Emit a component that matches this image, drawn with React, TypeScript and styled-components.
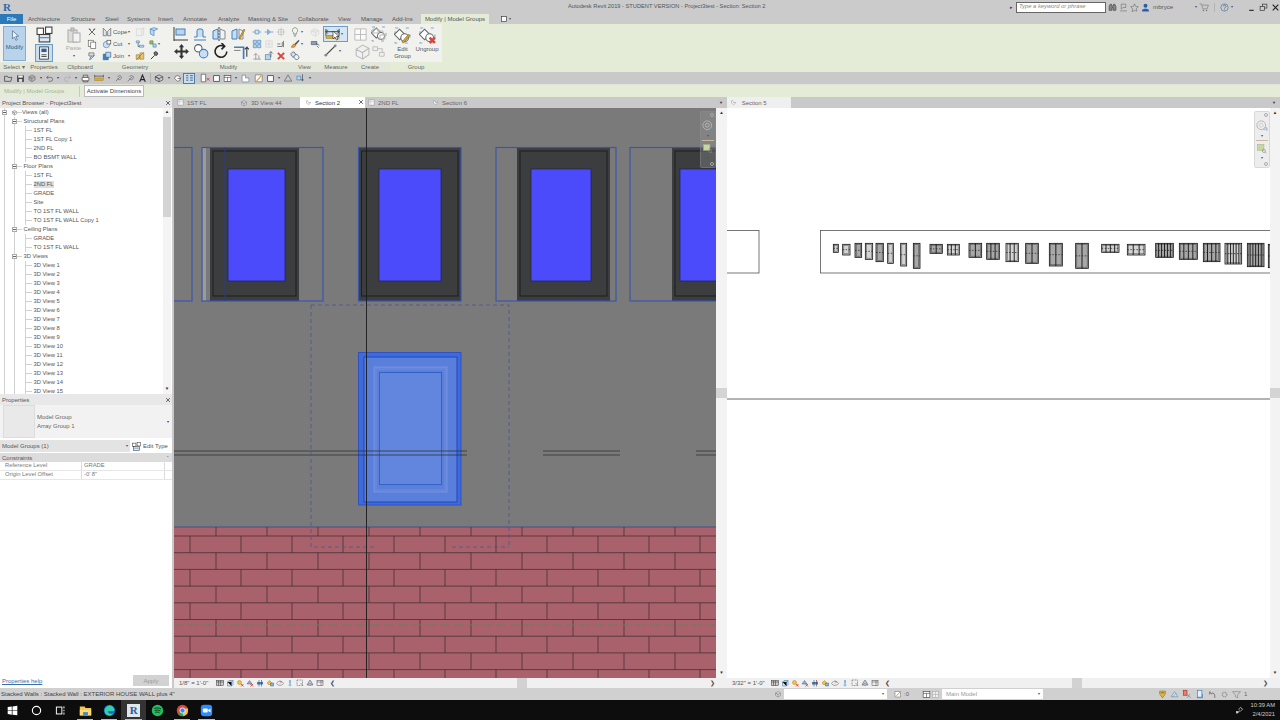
import React from 'react';
import styled, { createGlobalStyle, css } from 'styled-components';

const Global = createGlobalStyle`
  html, body { margin: 0; padding: 0; background: #fff; }
  #root { width: 1280px; height: 720px; overflow: hidden; }
  * { box-sizing: border-box; }
`;

const Page = styled.div`
  width: 1280px; height: 720px; display: flex; flex-direction: column; overflow: hidden;
  font-family: "Liberation Sans", Arial, sans-serif; font-size: 6px; line-height: 1; color: #444; background: #ccc;
`;

/* ---------- icons ---------- */
const Svg = styled.svg<{ $s?: number; $faded?: boolean }>`
  width: ${p => p.$s ?? 10}px; height: ${p => p.$s ?? 10}px; flex: none; display: block;
  ${p => p.$faded && css`opacity: .4;`}
`;
const B = '#3f80bd', D = '#3b3b3b', G = '#8a8a8a', Y = '#d9a93a', R = '#d8433a';
const paths: Record<string, React.ReactNode> = {
  cursor: <path d="M5 1v12l3-3 2 5 2-1-2-5h4z" fill="#eef4fa" stroke="#44658a" />,
  props: <><rect x="1" y="2" width="6" height="6" fill="#fff" stroke={D} /><rect x="9" y="1" width="6" height="6" fill="#fff" stroke={D} /><rect x="3" y="8" width="10" height="7" fill="#dfe8f2" stroke={D} /><path d="M3 11h10" stroke={B} /></>,
  propsS: <><rect x="3" y="1" width="10" height="14" fill="#f4f6f8" stroke={D} /><rect x="5" y="3" width="6" height="4" fill="#2f5e93" /><path d="M5 10h6M5 12h6" stroke={D} /></>,
  paste: <><rect x="2" y="3" width="9" height="12" fill="#ddd" stroke="#aaa" /><rect x="5" y="1" width="3" height="3" fill="#ccc" stroke="#aaa" /><rect x="7" y="6" width="7" height="9" fill="#f3f3f3" stroke="#aaa" /></>,
  x: <path d="M3 3l10 10M13 3L3 13M3 3l3 1M13 3l-3 1" stroke="#555" strokeWidth="1.4" fill="none" />,
  copy: <><rect x="2" y="2" width="8" height="10" fill="#fff" stroke="#555" /><rect x="6" y="5" width="8" height="10" fill="#fff" stroke="#555" /></>,
  match: <><path d="M3 3h8v5H3z" fill="#ddd" stroke="#555" /><path d="M7 8l-3 6M5 14l7-7" stroke={B} strokeWidth="1.5" /></>,
  cope: <><path d="M2 2l5 5v7H2zM14 2L9 7v7h5z" fill="#dfe7ef" stroke="#555" /></>,
  cut: <><circle cx="7" cy="9" r="5" fill="#cfe0f0" stroke={B} /><rect x="8" y="2" width="6" height="6" fill="#fff" stroke={D} /></>,
  join: <><path d="M2 5h8v9H2z" fill={B} stroke="#2c5f91" /><path d="M6 2h8v8H6z" fill="#bcd4ea" stroke="#2c5f91" /></>,
  geo1: <><rect x="2" y="3" width="9" height="11" fill="#eee" stroke="#aaa" /><path d="M11 3l3-2v11l-3 2" fill="#ddd" stroke="#aaa" /></>,
  geo2: <><path d="M2 3h5v3H2zM7 10h7v3H7z" fill="#c9def0" stroke={B} /><path d="M5 6v6h2" stroke={D} fill="none" /></>,
  geo3: <><path d="M2 13V6h5v7zM8 13V3h6v10z" fill="#e3c67f" stroke="#a07c20" /><path d="M2 14l12-12" stroke={B} /></>,
  geo4: <><path d="M2 3l6-2 6 2-6 3zM2 3v8l6 3V6" fill="#bcd4ea" stroke={B} /></>,
  geo5: <><path d="M3 3h5v5H3z" fill="#9bc46a" stroke="#4f7f2a" /><path d="M8 8h5v5H8z" fill="#bcd4ea" stroke={B} /></>,
  key: <path d="M3 13l6-6M8 3a3 3 0 1 1 4 4l-3-1z" stroke={D} strokeWidth="1.6" fill="#777" />,
  align: <><path d="M1 1v14M1 14h14" stroke={D} fill="none" /><rect x="3" y="3" width="9" height="6" fill="#bcd4ea" stroke={B} /></>,
  offset: <><path d="M2 14h12M2 11h3V5a2 2 0 0 1 2-2h2a2 2 0 0 1 2 2v6h3" fill="#c9def0" stroke={B} /></>,
  mirror: <><path d="M8 1v14" stroke={D} strokeDasharray="2 1" /><path d="M7 3v10L2 13V5z" fill="#c9def0" stroke={B} /><path d="M9 3v10l5 0V5z" fill="#eef3f8" stroke={G} /></>,
  mirror2: <><path d="M7 3v10L2 13V5z" fill="#c9def0" stroke={B} /><path d="M9 3v10l4 0V5z" fill="#eef3f8" stroke={G} /><path d="M10 13l5-9-1-1-5 9z" fill={Y} stroke="#8b6a12" strokeWidth=".6" /></>,
  move: <path d="M8 1l2.500 3h-1.500v3h3V5.500L15 8l-3 2.500V9H9v3h1.500L8 15l-2.500-3H7V9H4v1.500L1 8l3-2.500V7h3V4H5.500z" fill="#333" />,
  copyO: <><circle cx="5" cy="5" r="3.500" fill="#fff" stroke="#555" /><circle cx="10" cy="10" r="4" fill="#c9def0" stroke={B} /></>,
  rotate: <path d="M13 8a5.500 5.500 0 1 1-3-5M8 0l3 3-3 3" fill="none" stroke="#222" strokeWidth="1.500" />,
  trim: <><path d="M1 4h9v11" fill="none" stroke={B} strokeWidth="1.600" /><path d="M13 13V4l-2 2M13 4l2 2" stroke={D} fill="none" /><path d="M1 7h6" stroke={G} /></>,
  s1: <path d="M1 8h4M11 8h4M5 5h6v6H5z" stroke={B} fill="#d6e5f3" />,
  s2: <path d="M1 8h5M10 8h5M6 4l4 4-4 4zM10 4" stroke={B} fill="#9cc1e2" />,
  s3: <><path d="M2 2h5v5H2zM9 2h5v5H9zM2 9h5v5H2zM9 9h5v5H9z" fill="#bcd4ea" stroke={B} /></>,
  s4: <><rect x="3" y="3" width="10" height="10" fill="#eee" stroke="#aaa" /><path d="M3 8h10M8 3v10" stroke="#aaa" /></>,
  s5: <path d="M2 13h12M6 13V4l-3 3M6 4l3 3M11 13V7" stroke="#777" fill="none" />,
  s6: <path d="M4 4h8v8H4zM8 1v14M1 8h14" stroke="#666" fill="none" />,
  s7: <path d="M2 12h8V5M2 8h5M12 3v10" stroke={D} fill="none" />,
  s8: <><rect x="2" y="6" width="8" height="8" fill="#bcd4ea" stroke={B} /><path d="M11 1v9M14 4l-3-3-3 3" stroke={D} fill="none" /></>,
  del: <path d="M3 3l10 10M13 3L3 13" stroke={R} strokeWidth="3" />,
  bulb: <><path d="M8 1a4.500 4.500 0 0 0-2.500 8v2h5V9A4.500 4.500 0 0 0 8 1z" fill="#f8f4d8" stroke="#4d7396" /><path d="M6 13h4M7 15h2" stroke="#555" /></>,
  grayBox: <><path d="M2 6l5-3 7 3-5 3z" fill="#ddd" stroke="#aaa" /><path d="M2 6v5l7 4V9zM14 6v5l-5 4" fill="#eee" stroke="#aaa" /></>,
  paint: <><path d="M14 1L7 8l2 2 6-7z" fill="#555" /><path d="M7 8c-3 0-3 3-5 5 3 1 7 0 7-3z" fill={Y} stroke="#b9501f" /></>,
  screen: <><path d="M2 4h9v5H2z" fill="#8aa2bd" stroke="#556" /><path d="M11 11l3 3M9 7l6 3" stroke={D} /></>,
  link: <><rect x="2" y="2" width="7" height="8" rx="3" fill="#c9def0" stroke="#556" transform="rotate(-30 5 6)" /><rect x="7" y="6" width="7" height="8" rx="3" fill="#eef3f8" stroke="#556" transform="rotate(-30 10 10)" /></>,
  dim: <><path d="M1 2v7M15 2v7M1 5h14" stroke={D} fill="none" /><path d="M1 5l2-2M1 5l2 2M15 5l-2-2M15 5l-2 2" stroke={D} /><rect x="1" y="9" width="14" height="3" fill={Y} stroke="#856611" strokeWidth=".5" /></>,
  diag: <><path d="M3 13L13 3" stroke="#444" strokeWidth="1.300" /><circle cx="3" cy="13" r="1.500" fill="#888" /><circle cx="13" cy="3" r="1.500" fill="#888" /></>,
  fadeA: <><path d="M2 2h12v12H2zM2 8h12M8 2v12" fill="#fafafa" stroke="#bbb" /></>,
  fadeB: <><path d="M3 6l6-4 6 3-6 4zM3 6v6l6 3V9z" fill="#f1f1f1" stroke="#bbb" /><path d="M15 5v6l-6 4" fill="none" stroke="#bbb" /></>,
  fadeC: <><path d="M2 3h5v4H2zM9 9h5v4H9zM7 5h5v4" fill="none" stroke="#bbb" /></>,
  group: <><rect x="1" y="1" width="14" height="14" fill="none" stroke="#7ea9cf" strokeDasharray="3 7" /><rect x="2" y="4" width="7" height="7" fill="#fff" stroke="#666" transform="rotate(45 6 7)" /><circle cx="10" cy="10" r="3.600" fill="#fff" stroke="#666" /></>,
  pencil: <path d="M9 15l6-7-1.500-1-6 7z" fill={Y} stroke="#7a5c10" strokeWidth=".6" />,
  redx: <path d="M10 10l5 5M15 10l-5 5" stroke={R} strokeWidth="2.400" />,
  star: <path d="M8 1.500l2 4.500 4.800.5-3.600 3.200 1 4.800L8 13l-4.200 2.500 1-4.800L1.200 6.500 6 6z" fill="none" stroke="#666" />,
  binoc: <path d="M2 13V6l2-4h2v3h4V2h2l2 4v7h-5V8H7v5z" fill="#888" stroke="#333" />,
  comm: <><path d="M4 2h8v6H7l-3 3z" fill="none" stroke="#666" /><path d="M2 14h12" stroke="#666" /></>,
  user: <><circle cx="8" cy="5" r="3.500" fill="#2a5ea8" /><path d="M2 15v-3l4-2h4l4 2v3z" fill="#2a5ea8" /></>,
  cart: <><path d="M1 3h3l2 8h7l2-6H5" fill="none" stroke="#777" /><circle cx="7" cy="13.500" r="1.200" fill="#777" /><circle cx="12" cy="13.500" r="1.200" fill="#777" /></>,
  help: <><circle cx="8" cy="8" r="6.500" fill="none" stroke="#4d7eb5" strokeWidth="1.300" /><path d="M6 6c0-3 4.500-3 4.500 0 0 2-2.500 1.800-2.500 4M8 11.500v1.500" stroke="#555" fill="none" strokeWidth="1.200" /></>,
  min: <path d="M4 13h8" stroke="#222" strokeWidth="2" />,
  restore: <><rect x="6" y="2" width="8" height="7" fill="none" stroke="#333" strokeWidth="1.200" /><rect x="2" y="6" width="8" height="7" fill="#ccc" stroke="#333" strokeWidth="1.200" /></>,
  close: <path d="M3 3l10 10M13 3L3 13" stroke="#222" strokeWidth="2" />,
  closeT: <path d="M3 3l10 10M13 3L3 13" stroke="#222" strokeWidth="1.800" />,
  open: <path d="M1 4h5l1 2h7l-2 7H1z" fill="none" stroke="#333" strokeWidth="1.200" />,
  save: <><rect x="2" y="2" width="12" height="12" rx="1" fill="#444" /><rect x="4" y="2.500" width="8" height="4" fill="#eee" /><rect x="5" y="9" width="6" height="5" fill="#ddd" /></>,
  sync: <><path d="M3 6l5-3 5 3-5 3zM3 6v5l5 3V9zM13 6v5l-5 3" fill="#aaa" stroke="#777" /></>,
  undo: <path d="M3 6h7a3.500 3.500 0 0 1 0 7H6M3 6l3-3M3 6l3 3" fill="none" stroke="#555" strokeWidth="1.200" />,
  redo: <path d="M13 6H6a3.500 3.500 0 0 0 0 7h4M13 6l-3-3M13 6l-3 3" fill="none" stroke="#aaa" strokeWidth="1.200" />,
  print: <><rect x="2" y="6" width="12" height="6" rx="1" fill="#fff" stroke="#333" strokeWidth="1.200" /><path d="M4 6V2h8v4M4 12v2h8v-2" fill="none" stroke="#333" /></>,
  qdim: <><path d="M1 5h14M1 3v4M15 3v4" stroke="#333" fill="none" /><rect x="1" y="8" width="14" height="4" fill={Y} stroke="#80620f" strokeWidth=".5" /></>,
  tag: <path d="M3 13l8-8M6 5c3-4 8-2 7 2s-5 4-7 1" fill="none" stroke="#555" />,
  textA: <path d="M3 14L8 2l5 12M5 10h6" fill="none" stroke="#222" strokeWidth="2" />,
  d3: <><path d="M2 6l6-3 6 3-6 3zM2 6v5l6 3V9zM14 6v5l-6 3" fill="#ccc" stroke="#333" /></>,
  sect: <><path d="M3 8a5 5 0 1 1 5 5z" fill="#fff" stroke="#333" /><path d="M8 8h6" stroke="#333" /></>,
  thin: <><path d="M2 3h4M2 7h4M2 11h4M9 3h5M9 7h5M9 11h5" stroke="#1e3a5e" strokeWidth="1.300" /></>,
  winX: <><path d="M2 2h7v12H2z" fill="#fff" stroke="#444" /><path d="M11 8l4 4M15 8l-4 4" stroke={R} strokeWidth="1.500" /></>,
  sq: <rect x="3" y="3" width="10" height="10" fill="#fff" stroke="#333" strokeWidth="1.300" />,
  win2: <><rect x="2" y="3" width="12" height="10" fill="#fff" stroke="#333" /><path d="M2 6h12M8 6v7" stroke="#333" /></>,
  lev: <><path d="M2 14V2h6v5h6v7z" fill="#fff" stroke="#4d7396" /></>,
  ed: <><path d="M2 3h11v11H2z" fill="#fff" stroke="#666" /><path d="M4 13l8-9" stroke={Y} strokeWidth="2" /></>,
  tri: <path d="M2 13h12L8 3z" fill="none" stroke="#555" />,
  xyz: <><path d="M3 5h6v6H3z" fill="#bcd4ea" stroke={B} /><path d="M12 2v11M9 11h5" stroke={D} /></>,
  sec: <path d="M5 3a5 5 0 1 0 8 5H8z" fill="#fff" stroke="#777" />,
  plan: <><rect x="2" y="2" width="12" height="12" fill="#f6f6f6" stroke="#888" /><path d="M2 6h12M6 2v12" stroke="#bbb" /></>,
  d3g: <><path d="M3 6l5-3 5 3-5 3zM3 6v5l5 3V9zM13 6v5l-5 3" fill="#ddd" stroke="#777" /></>,
  wheel: <><circle cx="7" cy="7" r="5.800" fill="none" stroke="#b5b5b5" strokeWidth="1.300" /><circle cx="7" cy="7" r="2.500" fill="none" stroke="#c5c5c5" /><path d="M10 12.500h2.500M12 10.500h2.500v4" stroke="#5b8fbe" strokeWidth=".9" fill="none" /></>,
  navZoom: <><rect x="1" y="1" width="10" height="9" fill="#c9d6a3" stroke="#aab58a" /><circle cx="11" cy="11" r="2.500" fill="none" stroke="#888" /><path d="M13 13l2 2" stroke="#888" /></>,
  vb1: <><rect x="1" y="3" width="14" height="10" fill="#ccc" stroke="#333" /><path d="M1 6h14M5 3v10M9 3v10" stroke="#333" /></>,
  vb2: <><path d="M3 6l3-3h8v8l-3 3H3z" fill="#dbe8f5" stroke="#35648f" /><path d="M3 6h8v8M11 6l3-3" stroke="#35648f" /></>,
  vb3: <><circle cx="7" cy="7" r="4" fill="#f5c23e" stroke="#a87f12" /><path d="M10 10l5 5M15 10l-5 5" stroke={R} strokeWidth="1.800" /></>,
  vb4: <><path d="M2 10l5-7 5 7z" fill="#8fb1d0" stroke="#35648f" /><path d="M9 10l5 5M14 10l-5 5" stroke={R} strokeWidth="1.800" /></>,
  vb5: <><path d="M2 6h12v5H2z" fill="#4d7eb5" /><path d="M6 2v13M11 2v13" stroke="#333" /><path d="M10 2l3 3" stroke={R} /></>,
  vb6: <><path d="M2 8l5-5 4 4-5 5z" fill="#f5c23e" stroke="#a87f12" /><path d="M9 8h6v6H9z" fill="#8fb1d0" stroke="#35648f" /></>,
  vb7: <path d="M1 9c3-6 11-6 14 0-3 5-11 5-14 0zM8 3l3 3-3 3" fill="none" stroke="#555" />,
  vb8: <><path d="M8 2v7" stroke="#2b7fc6" strokeWidth="2" /><circle cx="8" cy="12" r="2" fill="none" stroke="#2b7fc6" /></>,
  vb9: <><rect x="2" y="2" width="11" height="11" fill="none" stroke="#444" strokeDasharray="2 1" /><path d="M9 8l5 5" stroke="#444" /></>,
  vb10: <><path d="M2 12l5-9h2l5 9z" fill="#b9cde0" stroke="#444" /><circle cx="8" cy="11" r="2" fill="#fff" stroke="#444" /></>,
  vb11: <><rect x="2" y="3" width="12" height="10" fill="none" stroke="#444" /><path d="M2 6h12M10 3v10" stroke="#444" /></>,
  funnel: <path d="M1 3h14l-5 6v5l-4-2V9z" fill="none" stroke="#777" />,
  worksets: <><path d="M3 2h10v5l-5 7-5-7z" fill="#e2b93c" stroke="#7f6513" /><path d="M5 5h6" stroke="#333" /></>,
  s1b: <><path d="M2 12L8 3l6 9z" fill="#d9e6f2" stroke="#4d7eb5" /><path d="M5 12l6-6" stroke="#777" /></>,
  s2b: <><rect x="2" y="2" width="6" height="8" fill="#e78072" stroke="#9e3228" /><path d="M8 9l6 5M8 14l5-6" stroke="#4d7eb5" /></>,
  s3b: <><rect x="4" y="2" width="7" height="11" fill="#e8f0f8" stroke="#2f78be" /><path d="M12 8v6H3" stroke="#2f78be" fill="none" /></>,
  s4b: <path d="M3 3l3 4 3-2 3 4v5M3 3v5" fill="none" stroke="#333" />,
  gear: <circle cx="8" cy="8" r="4" fill="none" stroke="#999" strokeWidth="2.500" strokeDasharray="2 1" />,
  net: <><path d="M3 13l3-3M10 3l3 3M7 9l-2 2 1 1 2-2z" stroke="#ddd" fill="none" /><rect x="8" y="3" width="5" height="5" fill="none" stroke="#ddd" transform="rotate(45 10 5)" /><rect x="2" y="9" width="3" height="4" fill="#ddd" /></>,
  win: <path d="M1 3l6-1v5.500H1zM8 2l7-1v6.500H8zM1 8.500h6V14l-6-1zM8 8.500h7V15l-7-1z" fill="#fff" />,
  ring: <circle cx="8" cy="8" r="6" fill="none" stroke="#fff" strokeWidth="1.700" />,
  tv: <><rect x="2" y="3" width="8" height="10" fill="none" stroke="#fff" strokeWidth="1.400" /><path d="M13 2v3M13 7v2M13 11v3" stroke="#fff" strokeWidth="1.400" /></>,
  folder: <><path d="M1 3h6l1 2h7v9H1z" fill="#f4c653" /><path d="M1 7h14v7H1z" fill="#ffdb76" /><path d="M5 10h6v4H5z" fill="#3e8ecf" /></>,
  edge: <><circle cx="8" cy="8" r="7" fill="#1767c4" /><path d="M2 9a6 6 0 0 1 12-2c0 2-2 2-4 2H6c0 3 4 4 7 2-2 4-8 4-10 1z" fill="#36d0a6" /></>,
  spot: <><circle cx="8" cy="8" r="7" fill="#20c05c" /><path d="M4 5.500c3-1 6-.8 8.500.6M4.500 8c2.500-.8 5-.5 7 .6M5 10.300c2-.6 4-.4 5.500.5" stroke="#10261a" fill="none" strokeWidth="1.100" /></>,
  chrome: <><circle cx="8" cy="8" r="7" fill="#e3463a" /><path d="M8 8L2 12a7 7 0 0 0 7 3z" fill="#2fa44f" /><path d="M8 8l6-3a7 7 0 0 1-5 10z" fill="#f7c52c" /><circle cx="8" cy="8" r="3.200" fill="#4285f4" stroke="#fff" /></>,
  zoomA: <><rect x="1" y="1" width="14" height="14" rx="4" fill="#2d8cff" /><rect x="3.500" y="5.500" width="6" height="5" rx="1" fill="#fff" /><path d="M10 7.500l3-2v5l-3-2z" fill="#fff" /></>,
};
const Ico = ({ n, s, faded, extra }: { n: string; s?: number; faded?: boolean; extra?: string }) => (
  <Svg viewBox="0 0 16 16" $s={s} $faded={faded}>{paths[n]}{extra && paths[extra]}</Svg>
);

/* ---------- title bar ---------- */
const TitleBar = styled.header`
  height: 14px; flex: none; display: flex; align-items: center; background: #cbcbcb; padding: 0 0 0 3px;
`;
const Logo = styled.b`
  font-size: 11px; color: #2d6aa8; font-family: "Liberation Serif", serif; width: 10px; font-weight: 700;
`;
const TitleText = styled.span`
  flex: 1; padding-left: 555px; font-size: 5.700px; color: #555; white-space: nowrap;
`;
const SearchArrow = styled.span`
  font-size: 5px; margin-right: 3px; color: #444;
`;
const SearchBox = styled.div`
  width: 90px; height: 11px; background: #fff; border: 1px solid #666; font-style: italic; color: #888;
  padding: 1px 2px; display: flex; align-items: center; font-size: 5.800px; margin-right: 2px;
`;
const TitleTools = styled.div`
  display: flex; align-items: center; gap: 2px;
`;
const UserName = styled.span`
  width: 41px; padding-left: 1px; color: #555; font-size: 6.200px;
`;
const Caret = styled.span`
  font-size: 4px; color: #555; flex: none; display: block;
`;
const Sep = styled.i`
  width: 1px; height: 9px; background: #b4b4b4; margin: 0 3px; display: block;
`;
const WinButtons = styled.div`
  display: flex; gap: 3px; margin-left: 14px;
`;

/* ---------- ribbon ---------- */
const TabBar = styled.nav`
  height: 10px; flex: none; display: flex; align-items: stretch; background: #cbcbcb; font-size: 6px; color: #555;
`;
const FileTab = styled.div`
  width: 23px; background: #2a79b9; color: #fff; display: flex; align-items: center; justify-content: center; margin-right: 5px;
`;
const RibbonTab = styled.div<{ $w: number }>`
  width: ${p => p.$w}px; display: flex; align-items: center; white-space: nowrap;
`;
const ActiveTab = styled.div`
  width: 68px; margin-left: -2px; background: #e4ecd7; display: flex; align-items: center; justify-content: center; color: #555;
`;
const TabExtra = styled.div`
  margin-left: 11px; display: flex; align-items: center; gap: 1px; font-size: 4px;
`;
const Ribbon = styled.section`
  height: 48px; flex: none; display: flex; background: #e4ecd7;
`;
const Panel = styled.div<{ $w: number }>`
  width: ${p => p.$w}px; flex: none; display: flex; flex-direction: column;
`;
const PanelBody = styled.div<{ $pad?: number; $gap?: number }>`
  height: 38px; display: flex; background: #f1f2ee; padding: 2px ${p => p.$pad ?? 0}px 0; gap: ${p => p.$gap ?? 0}px; align-items: flex-start;
`;
const PanelLabel = styled.div`
  height: 10px; display: flex; align-items: center; justify-content: center; background: #e3e7da; color: #666; font-size: 6px; gap: 3px;
`;
const GroupLabel = styled(PanelLabel)`
  background: #e4ecd7;
`;
const ModifyBtn = styled.div`
  width: 23px; height: 35px; margin-left: 3px; background: #b9d3ea; border: 1px solid #86add0; display: flex; flex-direction: column;
  align-items: center; padding-top: 3px; gap: 3px; color: #3d5a75; font-size: 6px;
`;
const BigTool = styled.div<{ $w?: number; $faded?: boolean }>`
  width: ${p => p.$w ?? 22}px; display: flex; flex-direction: column; align-items: center; gap: 2px; text-align: center; color: ${p => p.$faded ? '#aaa' : '#555'};
  line-height: 1.2; padding-top: 1px;
`;
const HiliteBtn = styled.div`
  width: 18px; height: 18px; background: #c9dff1; border: 1px solid #6d9cc6; display: flex; align-items: center; justify-content: center;
`;
const Col = styled.div<{ $w?: number; $gap?: number; $pt?: number; $a?: string }>`
  display: flex; flex-direction: column; width: ${p => p.$w ? p.$w + 'px' : 'auto'}; gap: ${p => p.$gap ?? 2}px; padding-top: ${p => p.$pt ?? 1}px;
  align-items: ${p => p.$a ?? 'center'}; flex: none;
`;
const Row = styled.div<{ $gap?: number }>`
  display: flex; align-items: center; gap: ${p => p.$gap ?? 2}px;
`;
const ToolText = styled.span`
  color: #555; font-size: 6px; width: 14px;
`;
const MeasureBtn = styled.div`
  width: 25px; height: 16px; border: 1px solid #6d9cc6; background: #d5e6f4; display: flex; align-items: center; gap: 1px; padding-left: 1px; position: relative;
`;
const MouseCursor = styled.svg`
  position: absolute; left: 8px; top: 3px; width: 8px; height: 11px;
`;

/* ---------- qat + options ---------- */
const Qat = styled.div`
  height: 12px; flex: none; display: flex; align-items: center; background: #c9c9c9; padding-left: 3px;
`;
const QSlot = styled.div<{ $w?: number; $on?: boolean }>`
  width: ${p => p.$w ?? 12}px; height: 11px; flex: none; display: flex; align-items: center; justify-content: center; font-size: 4px; color: #444;
  ${p => p.$on && css`background: #c9dff1; border: 1px solid #4b7fae;`}
`;
const QDiv = styled.i`
  width: 1px; height: 10px; background: #aeaeae; display: block; margin: 0 2px; flex: none;
`;
const OptionsBar = styled.div`
  height: 13px; flex: none; display: flex; align-items: center; background: #e4ecd7; padding-left: 4px; border-top: 1px solid #dfe4d4;
`;
const OptionsName = styled.span`
  color: #a9b09e; width: 75px; font-size: 6px;
`;
const OptionsSep = styled.i`
  width: 1px; height: 11px; background: #c5cbb9; margin-right: 4px; display: block;
`;
const Tip = styled.div`
  width: 60px; height: 12px; background: #fff; border: 1px solid #bbb; display: flex; align-items: center; justify-content: center; color: #444; font-size: 6px; white-space: nowrap;
`;

/* ---------- workspace ---------- */
const Workspace = styled.main`
  height: 591px; flex: none; display: flex; background: #c9c9c9;
`;
const Side = styled.aside`
  width: 172px; margin-right: 2px; flex: none; display: flex; flex-direction: column; background: #fff;
`;
const PaneHead = styled.div`
  height: 11px; flex: none; display: flex; align-items: center; justify-content: space-between; padding: 0 1px 0 2px; background: #e8e8e8; color: #555; font-size: 6px;
`;
const Browser = styled.div`
  height: 286px; flex: none; display: flex; background: #fff; overflow: hidden;
`;
const Tree = styled.div`
  flex: 1; overflow: hidden;
`;
const TreeRow = styled.div<{ $lv: number }>`
  height: 9px; display: flex; align-items: center; position: relative; color: #555; font-size: 5.800px; white-space: nowrap;
  padding-left: ${p => p.$lv === 0 ? 22 : p.$lv === 1 ? 23.500 : 33.500}px;
  background-image:
    ${p => p.$lv > 0 ? 'linear-gradient(#d2d2d2,#d2d2d2), linear-gradient(#d2d2d2,#d2d2d2)' : 'linear-gradient(#d2d2d2,#d2d2d2)'}
    ${p => p.$lv === 2 ? ', linear-gradient(#d2d2d2,#d2d2d2)' : ''};
  background-size: 1px 100%;
  background-repeat: no-repeat;
  background-position: ${p => p.$lv === 0 ? '4px 0' : p.$lv === 1 ? '4px 0, 14px 0' : '4px 0, 14px 0, 25px 0'};
  &::before {
    content: ''; position: absolute; top: 4px; height: 1px; background: #d2d2d2;
    left: ${p => p.$lv === 2 ? 25 : 17}px; width: ${p => p.$lv === 2 ? 7 : 5}px;
  }
`;
const Expander = styled.i<{ $x: number }>`
  position: absolute; left: ${p => p.$x}px; top: 2px; width: 5px; height: 5px; background: #fff; border: 1px solid #aaa; display: block;
  &::after { content: ''; position: absolute; left: 0; top: 1px; width: 3px; height: 1px; background: #666; }
`;
const RootIcon = styled.span`
  position: absolute; left: 11px; top: 1px; display: block;
`;
const NodeLabel = styled.span<{ $sel?: boolean }>`
  ${p => p.$sel && css`background: #dedede;`} padding: 1px 1px 1px 0;
`;
const VBar = styled.div<{ $w?: number; $bg?: string }>`
  width: ${p => p.$w ?? 8}px; flex: none; display: flex; flex-direction: column; align-items: center; background: ${p => p.$bg ?? '#f3f3f3'};
`;
const BrowserBarWrap = styled(VBar)`
  margin-right: 1px; background: #f4f4f4;
`;
const Arrow = styled.span<{ $h?: number }>`
  height: ${p => p.$h ?? 9}px; font-size: 4.500px; color: #333; display: flex; align-items: center; justify-content: center; flex: none;
`;
const Thumb = styled.div<{ $h: number }>`
  width: 100%; height: ${p => p.$h}px; background: #d4d4d4; flex: none;
`;
const Spacer = styled.div`
  flex: 1;
`;
const TypeBox = styled.div`
  height: 33px; flex: none; display: flex; align-items: center; padding-left: 3px; background: #f2f2f2;
`;
const Thumbnail = styled.div`
  width: 32px; height: 33px; background: #e9e9e9; border: 1px solid #dcdcdc; flex: none; margin-right: 2px;
`;
const TypeText = styled.div`
  display: flex; flex-direction: column; gap: 2.500px; color: #666; font-size: 6px; flex: 1;
`;
const SmallCaret = styled.span`
  font-size: 4px; color: #444; margin-right: 3px;
`;
const Selector = styled.div`
  height: 15px; flex: none; display: flex; align-items: center; padding: 2px 0 1px; background: #fff; gap: 2px;
`;
const SelectField = styled.div`
  width: 130px; height: 100%; background: #e3e3e3; display: flex; align-items: center; justify-content: space-between; padding: 0 2px; color: #555; font-size: 6px;
`;
const EditType = styled.div`
  display: flex; align-items: center; gap: 2px; color: #555; font-size: 6px;
`;
const GroupHead = styled.div`
  height: 9px; flex: none; display: flex; align-items: center; justify-content: space-between; padding: 0 3px 0 2px; background: #dcdcdc; color: #555; font-size: 6px;
`;
const PropRow = styled.div`
  height: 9px; flex: none; display: grid; grid-template-columns: 82px 83px 1fr; border-bottom: 1px solid #e6e6e6; color: #777; font-size: 5.800px;
`;
const PropCell = styled.div`
  padding-left: 5px; border-right: 1px solid #dcdcdc; display: flex; align-items: center;
  & + & { padding-left: 2px; }
`;
const PropsFoot = styled.div`
  margin-top: auto; height: 13px; flex: none; display: flex; align-items: flex-start; justify-content: space-between; padding: 0 3px 0 2px; background: #fff;
`;
const HelpLink = styled.a`
  color: #3a6ea8; text-decoration: underline; font-size: 6px; padding-top: 3px;
`;
const ApplyBtn = styled.div`
  width: 36px; height: 11px; background: #d2d2d2; color: #999; display: flex; align-items: center; justify-content: center; font-size: 6px;
`;

/* view panes */
const Pane = styled.div`
  width: 553px; flex: none; display: flex; flex-direction: column;
`;
const ViewTabs = styled.div`
  height: 11px; flex: none; display: flex; align-items: stretch; background: #c9c9c9; color: #666; font-size: 6px; position: relative;
`;
const ViewTab = styled.div<{ $w: number; $on?: boolean; $pale?: boolean }>`
  width: ${p => p.$w}px; flex: none; display: flex; align-items: center; gap: 3px; padding-left: 3px; position: relative;
  ${p => p.$on && css`background: #fff; color: #333; padding-left: 5px;`}
  ${p => p.$pale && css`background: #efefef;`}
`;
const TabClose = styled.span`
  position: absolute; right: 1px; top: 2px;
`;
const TabDrop = styled.span`
  position: absolute; right: 4px; top: 4px; font-size: 4px; color: #333;
`;
const ViewBody = styled.div`
  height: 570px; flex: none; display: flex;
`;
const Drawing = styled.svg`
  width: 100%; height: 100%; display: block;
`;
const Stage = styled.div<{ $w: number; $bg: string }>`
  width: ${p => p.$w}px; flex: none; height: 100%; background: ${p => p.$bg}; position: relative; overflow: hidden;
`;
const NavBar = styled.div<{ $dark?: boolean }>`
  position: absolute; right: 0; top: 3px; width: 16px; height: 57px; border-radius: 2px; display: flex; flex-direction: column; align-items: center;
  justify-content: space-between; padding: 1px 0;
  background: ${p => p.$dark ? 'rgba(150,150,150,.35)' : 'rgba(235,235,235,.9)'}; border: 1px solid ${p => p.$dark ? 'rgba(140,140,140,.4)' : '#d8d8d8'};
`;
const NavDot = styled.i`
  width: 4px; height: 4px; border-radius: 50%; border: 1px solid #aaa; display: block; align-self: flex-end; margin-right: 1px;
`;
const NavGroup = styled.div`
  display: flex; flex-direction: column; align-items: center; gap: 2px; font-size: 4px; color: #555;
`;
const NavRule = styled.i`
  width: 12px; height: 1px; background: #c9b8a0; display: block;
`;
const ViewBar = styled.div`
  height: 10px; flex: none; display: flex; align-items: center; background: #f0f0f0; color: #555; font-size: 6px;
`;
const Scale = styled.span<{ $w: number }>`
  width: ${p => p.$w}px; padding-left: 5px; flex: none; white-space: nowrap;
`;
const BarIcons = styled.div`
  display: flex; align-items: center; gap: 2px; flex: none;
`;
const HScroll = styled.div<{ $l: number }>`
  flex: 1; height: 100%; position: relative; display: flex; align-items: center; justify-content: space-between; font-size: 6px; padding: 0 12px 0 6px; color: #444;
  &::after { content: ''; position: absolute; left: ${p => p.$l}px; top: 0; width: 10px; height: 100%; background: #d2d2d2; }
`;

/* status + taskbar */
const StatusBar = styled.footer`
  height: 12px; flex: none; display: flex; align-items: center; background: #d0d0d0; padding-left: 1px; color: #444; font-size: 6px;
`;
const StatusText = styled.span`
  width: 773px; flex: none; white-space: nowrap;
`;
const StatusSelect = styled.div<{ $w: number }>`
  width: ${p => p.$w}px; height: 10px; background: #fff; display: flex; align-items: center; justify-content: space-between; padding: 0 3px 0 4px; color: #999; font-size: 6px; flex: none; margin-left: 2px;
`;
const StatusGap = styled.div<{ $w: number }>`
  width: ${p => p.$w}px; flex: none; display: flex; align-items: center; gap: 2px; color: #666;
`;
const StatusTools = styled.div`
  margin-left: 115px; display: flex; align-items: center; gap: 3px; color: #666;
`;
const Taskbar = styled.div`
  height: 20px; flex: none; display: flex; align-items: stretch; background: #0d0d0d; color: #ddd; font-size: 6.500px;
`;
const TaskSlot = styled.div<{ $on?: boolean; $run?: boolean }>`
  width: 24.300px; display: flex; align-items: center; justify-content: center; position: relative; flex: none;
  ${p => p.$on && css`background: #333;`}
  ${p => p.$run && css`&::after { content: ''; position: absolute; left: 4px; right: 4px; bottom: 0; height: 1px; background: #9cc3e6; }`}
`;
const RevitTile = styled.span`
  width: 13px; height: 13px; background: #dfe6ee; color: #2a5d9c; font: 700 11px "Liberation Serif", serif; display: flex; align-items: center; justify-content: center;
`;
const Tray = styled.div`
  margin-left: auto; display: flex; align-items: center; gap: 7px; padding-right: 5px;
`;
const Clock = styled.div`
  display: flex; flex-direction: column; align-items: flex-end; gap: 3px; font-size: 5.800px; color: #ccc;
`;

/* ---------- canvas drawings ---------- */
const BLUE = '#3a56a8';
const WindowUnit = ({ ox, ox2, dx, dx2, gx, gx2 }: { ox?: number; ox2?: number; dx: number; dx2: number; gx: number; gx2: number }) => (
  <g>
    <rect x={dx} y={147} width={dx2 - dx} height={154} fill="#3b3d3f" />
    <rect x={dx + 3} y={151} width={dx2 - dx - 6} height={145} fill="none" stroke="#1e1e1e" />
    <rect x={gx} y={169} width={gx2 - gx} height={112} fill="#4b4bfb" stroke="#22224a" strokeWidth=".7" />
    <rect x={ox ?? dx} y={147.500} width={(ox2 ?? dx2) - (ox ?? dx)} height={153.500} fill="none" stroke={BLUE} strokeWidth="1.200" />
  </g>
);
const rowsY = [527, 536, 552.700, 569.400, 586.100, 602.800, 619.500, 636.200, 652.900, 669.600, 686];
const Bricks = () => (
  <g>
    <rect x={174} y={527} width={542} height={151} fill="#a9626b" />
    {rowsY.slice(0, -1).map((y, i) => {
      const joints = [];
      for (let k = 0; k < 12; k++) joints.push((i % 2 === 0 ? 165 : 190) + k * 51);
      return (
        <g key={y}>
          <line x1={174} x2={716} y1={y} y2={y} stroke={i === 0 ? '#2b3f9c' : '#3b2a2e'} strokeWidth=".7" />
          {joints.map(x => <line key={x} x1={x} x2={x} y1={y} y2={rowsY[i + 1]} stroke="#3b2a2e" strokeWidth=".7" />)}
        </g>
      );
    })}
    <line x1={174} x2={716} y1={625} y2={625} stroke="#6f7a5e" strokeWidth="1" strokeDasharray="10 4" />
  </g>
);
const MainDrawing = () => (
  <Drawing viewBox="174 108 542 570">
    <rect x={160} y={147.500} width={32} height={153.500} fill="none" stroke={BLUE} strokeWidth="1.200" />
    <rect x={202} y={147} width={4} height={154} fill="#9a9a9a" />
    <WindowUnit ox={202} ox2={323} dx={210} dx2={299} gx={228} gx2={285} />
    <line x1={225} x2={225} y1={147} y2={301} stroke="#2c3f80" />
    <WindowUnit dx={358.500} dx2={461} gx={379} gx2={441} />
    <WindowUnit ox={496} ox2={616} dx={517} dx2={610} gx={531} gx2={591} />
    <WindowUnit ox={630} ox2={730} dx={672} dx2={730} gx={680} gx2={730} />
    <rect x={358.500} y={352.500} width={102.500} height={152.500} fill="#3f6ad9" stroke="#2f52bf" />
    <rect x={364} y={357} width={93} height={145} fill="#5a7fdb" stroke="#1c46c4" />
    <rect x={374} y={367} width={73} height={125} fill="#6686dd" stroke="#7493e0" />
    <rect x={377} y={370} width={67} height={119} fill="#5b80da" />
    <rect x={379.500} y={372.500} width={62} height={112} fill="#6286de" stroke="#3461c9" />
    <g stroke="#2f3236" strokeWidth=".8">
      <path d="M174 451H467M174 455H467M543 451H620M543 455H620M696 451H716M696 455H716" />
    </g>
    <Bricks />
    <g fill="none" stroke="#4a5590" strokeWidth=".8" strokeDasharray="4 3">
      <path d="M311 305H509V547" />
      <path d="M311 305V547H376" />
      <path d="M452 547H509" />
    </g>
    <line x1={366.500} x2={366.500} y1={108} y2={678} stroke="#1b1b1b" strokeWidth=".9" />
  </Drawing>
);

const glyphs: [number, number, number, number, number, boolean][] = [
  [40, 55, 58, 82, 1, false], [68, 90, 58, 90, 1, false], [105, 125, 55, 97, 1, true], [136, 158, 55, 103, 1, false],
  [168, 190, 55, 110, 1, true], [203, 220, 55, 115, 1, false], [242, 260, 55, 123, 1, false], [280, 300, 55, 130, 1, true],
  [330, 367, 58, 85, 2, true], [382, 418, 58, 90, 3, false], [447, 485, 55, 97, 2, true], [500, 538, 55, 103, 3, true],
  [558, 595, 55, 110, 3, false], [617, 655, 55, 115, 2, true], [688, 727, 55, 123, 2, true], [767, 805, 55, 130, 2, true],
  [845, 897, 58, 82, 4, false], [922, 975, 58, 90, 3, false], [1007, 1060, 55, 97, 6, true], [1078, 1132, 55, 103, 4, true],
  [1150, 1200, 55, 110, 4, true], [1215, 1265, 55, 117, 6, false], [1282, 1332, 55, 125, 6, true], [1345, 1360, 58, 128, 1, true],
];
const Glyph = ({ g }: { g: typeof glyphs[number] }) => {
  const x = 820 + g[0] / 3, w = (g[1] - g[0]) / 3, y = 225 + g[2] / 3, h = (g[3] - g[2]) / 3;
  const lines = Array.from({ length: g[4] - 1 }, (_, i) => x + (w * (i + 1)) / g[4]);
  return (
    <g>
      <rect x={x} y={y} width={w} height={h} fill={g[5] ? '#a8a8a8' : '#d4d4d4'} stroke="#111" strokeWidth=".8" />
      <rect x={x + 1.200} y={y + 1.200} width={Math.max(w - 2.400, .5)} height={Math.max(h - 2.400, .5)} fill="none" stroke="#333" strokeWidth=".4" />
      {lines.map(l => <line key={l} x1={l} x2={l} y1={y} y2={y + h} stroke="#111" strokeWidth=".9" />)}
      <line x1={x} x2={x + w} y1={y + h / 2} y2={y + h / 2} stroke="#222" strokeWidth=".7" strokeDasharray="1.500 1.500" />
    </g>
  );
};
const SideDrawing = () => (
  <Drawing viewBox="727 108 543 570">
    <rect x={716} y={230.500} width={43} height={42.500} fill="none" stroke="#555" strokeWidth=".8" />
    <rect x={820.500} y={230.500} width={460} height={42.500} fill="none" stroke="#555" strokeWidth=".8" />
    {glyphs.map(g => <Glyph key={g[0]} g={g} />)}
    <line x1={727} x2={1270} y1={399} y2={399} stroke="#555" strokeWidth=".9" />
  </Drawing>
);

/* ---------- data ---------- */
const tabs: [string, number][] = [['Architecture', 43], ['Structure', 34], ['Steel', 22], ['Systems', 31], ['Insert', 25], ['Annotate', 35], ['Analyze', 30], ['Massing & Site', 50], ['Collaborate', 40], ['View', 23], ['Manage', 31], ['Add-Ins', 31]];
const tree: [number, string, boolean?][] = [
  [0, 'Views (all)'], [1, 'Structural Plans'], [2, '1ST FL'], [2, '1ST FL Copy 1'], [2, '2ND FL'], [2, 'BO BSMT WALL'],
  [1, 'Floor Plans'], [2, '1ST FL'], [2, '2ND FL', true], [2, 'GRADE'], [2, 'Site'], [2, 'TO 1ST FL WALL'], [2, 'TO 1ST FL WALL Copy 1'],
  [1, 'Ceiling Plans'], [2, 'GRADE'], [2, 'TO 1ST FL WALL'], [1, '3D Views'],
  ...Array.from({ length: 15 }, (_, i) => [2, `3D View ${i + 1}`] as [number, string]),
];
const vb = ['vb1', 'vb2', 'vb3', 'vb4', 'vb5', 'vb6', 'vb7', 'vb8', 'vb9', 'vb10', 'vb11'];
const Nav = ({ dark }: { dark?: boolean }) => (
  <NavBar $dark={dark}>
    <NavDot />
    <NavGroup><Ico n="wheel" s={12} /><span>▾</span></NavGroup>
    <NavRule />
    <NavGroup><Ico n="navZoom" s={10} /><span>▾</span></NavGroup>
    <NavDot />
  </NavBar>
);
const Sm = ({ n, f }: { n: string; f?: boolean }) => <Ico n={n} s={10} faded={f} />;

export default function App() {
  return (
    <Page>
      <Global />
      <TitleBar>
        <Logo>R</Logo>
        <TitleText>Autodesk Revit 2019 - STUDENT VERSION - Project3test - Section: Section 2</TitleText>
        <SearchArrow>▸</SearchArrow>
        <SearchBox>Type a keyword or phrase</SearchBox>
        <TitleTools>
          <Ico n="binoc" s={9} /><Ico n="comm" s={9} /><Ico n="star" s={9} /><Ico n="user" s={9} />
          <UserName>mbryce</UserName><Caret>▾</Caret><Ico n="cart" s={10} /><Sep /><Ico n="help" s={9} /><Caret>▾</Caret>
        </TitleTools>
        <WinButtons><Ico n="min" s={9} /><Ico n="restore" s={9} /><Ico n="close" s={9} /></WinButtons>
      </TitleBar>

      <TabBar>
        <FileTab>File</FileTab>
        {tabs.map(([t, w]) => <RibbonTab key={t} $w={w}>{t}</RibbonTab>)}
        <ActiveTab>Modify | Model Groups</ActiveTab>
        <TabExtra><Ico n="sq" s={8} />▾</TabExtra>
      </TabBar>

      <Ribbon>
        <Panel $w={28}>
          <PanelBody><ModifyBtn><Ico n="cursor" s={11} />Modify</ModifyBtn></PanelBody>
          <PanelLabel>Select ▾</PanelLabel>
        </Panel>
        <Panel $w={32}>
          <PanelBody $pad={6}><Col $w={20} $gap={1} $pt={0}><Ico n="props" s={17} /><HiliteBtn><Ico n="propsS" s={14} /></HiliteBtn></Col></PanelBody>
          <PanelLabel>Properties</PanelLabel>
        </Panel>
        <Panel $w={40}>
          <PanelBody $pad={3} $gap={3}>
            <BigTool $w={22} $faded><Ico n="paste" s={16} />Paste<Caret>▾</Caret></BigTool>
            <Col $w={10} $pt={1}><Sm n="x" /><Sm n="copy" /><Sm n="match" /></Col>
          </PanelBody>
          <PanelLabel>Clipboard</PanelLabel>
        </Panel>
        <Panel $w={70}>
          <PanelBody $pad={2} $gap={2}>
            <Col $w={31} $a="flex-start">
              <Row $gap={1}><Sm n="cope" /><ToolText>Cope</ToolText><Caret>▾</Caret></Row>
              <Row $gap={1}><Sm n="cut" /><ToolText>Cut</ToolText><Caret>▾</Caret></Row>
              <Row $gap={1}><Sm n="join" /><ToolText>Join</ToolText><Caret>▾</Caret></Row>
            </Col>
            <Col $w={10}><Sm n="geo1" f /><Sm n="geo2" /><Sm n="geo3" /></Col>
            <Col $w={13}><Sm n="geo4" /><Row $gap={0}><Sm n="geo5" /><Caret>▾</Caret></Row><Sm n="key" /></Col>
          </PanelBody>
          <PanelLabel>Geometry</PanelLabel>
        </Panel>
        <Panel $w={117}>
          <PanelBody $pad={3}>
            <Col $w={78} $gap={1} $pt={0} $a="flex-start">
              <Row $gap={3}><Ico n="align" s={16} /><Ico n="offset" s={16} /><Ico n="mirror" s={16} /><Ico n="mirror2" s={16} /></Row>
              <Row $gap={3}><Ico n="move" s={17} /><Ico n="copyO" s={17} /><Ico n="rotate" s={17} /><Ico n="trim" s={17} /></Row>
            </Col>
            <Col $w={12}><Sm n="s1" /><Sm n="s3" /><Sm n="s5" /></Col>
            <Col $w={11}><Sm n="s2" /><Sm n="s4" f /><Sm n="s8" /></Col>
            <Col $w={14}><Sm n="s6" f /><Sm n="s7" /><Sm n="del" /></Col>
          </PanelBody>
          <PanelLabel>Modify</PanelLabel>
        </Panel>
        <Panel $w={35}>
          <PanelBody $pad={3} $gap={1}>
            <Col $w={18} $a="flex-start"><Row $gap={1}><Sm n="bulb" /><Caret>▾</Caret></Row><Row $gap={1}><Sm n="paint" /><Caret>▾</Caret></Row><Sm n="link" /></Col>
            <Col $w={11}><Sm n="grayBox" f /><Sm n="screen" /></Col>
          </PanelBody>
          <PanelLabel>View</PanelLabel>
        </Panel>
        <Panel $w={28}>
          <PanelBody $pad={1}>
            <Col $w={26} $gap={1} $a="flex-start" $pt={0}>
              <MeasureBtn>
                <Ico n="dim" s={15} /><Caret>▾</Caret>
                <MouseCursor viewBox="0 0 8 11"><path d="M1 1v8l2-2 1.500 3 1.500-.7L4.500 6.500H7z" fill="#fff" stroke="#222" strokeWidth=".6" /></MouseCursor>
              </MeasureBtn>
              <Row $gap={1}><Ico n="diag" s={15} /><Caret>▾</Caret></Row>
            </Col>
          </PanelBody>
          <PanelLabel>Measure</PanelLabel>
        </Panel>
        <Panel $w={40}>
          <PanelBody $pad={3}>
            <Col $w={36} $gap={1} $pt={0} $a="flex-start">
              <Row $gap={3}><Ico n="fadeA" s={15} /><Ico n="group" s={16} extra="fadeC" /></Row>
              <Row $gap={1}><Ico n="fadeB" s={17} /><Ico n="fadeC" s={15} /></Row>
            </Col>
          </PanelBody>
          <PanelLabel>Create</PanelLabel>
        </Panel>
        <Panel $w={52}>
          <PanelBody $pad={1}>
            <BigTool $w={23}><Ico n="group" s={17} extra="pencil" />Edit<br />Group</BigTool>
            <BigTool $w={26}><Ico n="group" s={17} extra="redx" />Ungroup</BigTool>
          </PanelBody>
          <GroupLabel>Group</GroupLabel>
        </Panel>
      </Ribbon>

      <Qat>
        <QSlot $w={11}><Ico n="open" s={9} /></QSlot><QSlot><Ico n="save" s={9} /></QSlot><QSlot><Ico n="sync" s={10} /></QSlot><QSlot $w={6}>▾</QSlot>
        <QSlot $w={11}><Ico n="undo" s={9} /></QSlot><QSlot $w={6}>▾</QSlot><QSlot><Ico n="redo" s={9} /></QSlot><QSlot $w={6}>▾</QSlot>
        <QSlot $w={13}><Ico n="print" s={9} /></QSlot><QSlot $w={14}><Ico n="qdim" s={10} /></QSlot><QSlot $w={6}>▾</QSlot>
        <QSlot $w={13}><Ico n="tag" s={9} /></QSlot><QSlot $w={11}><Ico n="tag" s={9} /></QSlot><QSlot><Ico n="textA" s={9} /></QSlot><QDiv />
        <QSlot><Ico n="d3" s={10} /></QSlot><QSlot $w={7}>▾</QSlot><QSlot $w={11}><Ico n="sect" s={9} /></QSlot>
        <QSlot $on><Ico n="thin" s={9} /></QSlot><QSlot $w={4} />
        <QSlot><Ico n="winX" s={10} /></QSlot><QSlot $w={11}><Ico n="sq" s={9} /></QSlot><QSlot $w={11}><Ico n="win2" s={9} /></QSlot><QSlot $w={6}>▾</QSlot>
        <QSlot $w={13}><Ico n="lev" s={9} /></QSlot><QSlot $w={13}><Ico n="ed" s={10} /></QSlot><QSlot $w={11}><Ico n="sq" s={9} /></QSlot><QSlot $w={5}>▾</QSlot>
        <QSlot $w={13}><Ico n="tri" s={10} /></QSlot><QSlot><Ico n="xyz" s={10} /></QSlot><QSlot $w={8}>▾</QSlot>
      </Qat>

      <OptionsBar>
        <OptionsName>Modify | Model Groups</OptionsName>
        <OptionsSep />
        <Tip>Activate Dimensions</Tip>
      </OptionsBar>

      <Workspace>
        <Side>
          <PaneHead>Project Browser - Project3test<Ico n="closeT" s={6} /></PaneHead>
          <Browser>
            <Tree>
              {tree.map(([lv, t, sel], i) => (
                <TreeRow key={i} $lv={lv}>
                  {lv === 0 && <Expander $x={2} />}
                  {lv === 0 && <RootIcon><Ico n="d3g" s={7} /></RootIcon>}
                  {lv === 1 && <Expander $x={12} />}
                  <NodeLabel $sel={sel}>{t}</NodeLabel>
                </TreeRow>
              ))}
            </Tree>
            <BrowserBarWrap>
              <Arrow>▲</Arrow><Thumb $h={100} /><Spacer /><Arrow>▼</Arrow>
            </BrowserBarWrap>
          </Browser>
          <PaneHead>Properties<Ico n="closeT" s={6} /></PaneHead>
          <TypeBox>
            <Thumbnail />
            <TypeText><span>Model Group</span><span>Array Group 1</span></TypeText>
            <SmallCaret>▾</SmallCaret>
          </TypeBox>
          <Selector>
            <SelectField>Model Groups (1)<Caret>▾</Caret></SelectField>
            <EditType><Ico n="props" s={9} />Edit Type</EditType>
          </Selector>
          <GroupHead>Constraints<Caret>⌃</Caret></GroupHead>
          <PropRow><PropCell>Reference Level</PropCell><PropCell>GRADE</PropCell></PropRow>
          <PropRow><PropCell>Origin Level Offset</PropCell><PropCell>-0'  8"</PropCell></PropRow>
          <PropsFoot><HelpLink>Properties help</HelpLink><ApplyBtn>Apply</ApplyBtn></PropsFoot>
        </Side>

        <Pane>
          <ViewTabs>
            <ViewTab $w={63}><Ico n="plan" s={7} />1ST FL</ViewTab>
            <ViewTab $w={63}><Ico n="d3g" s={8} />3D View 44</ViewTab>
            <ViewTab $w={65} $on><Ico n="sec" s={7} />Section 2<TabClose><Ico n="closeT" s={6} /></TabClose></ViewTab>
            <ViewTab $w={64}><Ico n="plan" s={7} />2ND FL</ViewTab>
            <ViewTab $w={63}><Ico n="sec" s={7} />Section 6</ViewTab>
            <TabDrop>▼</TabDrop>
          </ViewTabs>
          <ViewBody>
            <Stage $w={542} $bg="#7a7a7a">
              <MainDrawing />
              <Nav dark />
            </Stage>
            <VBar $w={11}><Arrow $h={10}>▲</Arrow><Spacer /><Thumb $h={10} /><Spacer /><Arrow $h={10}>▼</Arrow></VBar>
          </ViewBody>
          <ViewBar>
            <Scale $w={42}>1/8" = 1'-0"</Scale>
            <BarIcons>{vb.map(n => <Ico key={n} n={n} s={8} />)}</BarIcons>
            <HScroll $l={193}><span>❮</span><span>❯</span></HScroll>
          </ViewBar>
        </Pane>

        <Pane>
          <ViewTabs>
            <ViewTab $w={64} $pale><Ico n="sec" s={7} />&nbsp;Section 5</ViewTab>
            <TabDrop>▼</TabDrop>
          </ViewTabs>
          <ViewBody>
            <Stage $w={543} $bg="#fff">
              <SideDrawing />
              <Nav />
            </Stage>
            <VBar $w={10}><Arrow $h={10}>▲</Arrow><Spacer /><Thumb $h={10} /><Spacer /><Arrow $h={10}>▼</Arrow></VBar>
          </ViewBody>
          <ViewBar>
            <Scale $w={44}>3/32" = 1'-0"</Scale>
            <BarIcons>{vb.map(n => <Ico key={n} n={n} s={8} />)}</BarIcons>
            <HScroll $l={193}><span>❮</span><span>❯</span></HScroll>
          </ViewBar>
        </Pane>
      </Workspace>

      <StatusBar>
        <StatusText>Stacked Walls : Stacked Wall : EXTERIOR HOUSE WALL plus 4"</StatusText>
        <Ico n="d3g" s={8} />
        <StatusSelect $w={103}><span /><Caret>▾</Caret></StatusSelect>
        <StatusGap $w={35}>&nbsp;&nbsp;&nbsp;<Ico n="ed" s={8} />:0</StatusGap>
        <Ico n="win2" s={9} /><Ico n="s4" s={9} />
        <StatusSelect $w={101}>Main Model<Caret>▾</Caret></StatusSelect>
        <StatusTools>
          <Ico n="worksets" s={9} /><Ico n="s1b" s={9} /><Ico n="s2b" s={10} /><Ico n="s3b" s={10} /><Ico n="s4b" s={9} /><Ico n="gear" s={9} /><Ico n="funnel" s={9} /><span>1</span>
        </StatusTools>
      </StatusBar>

      <Taskbar>
        <TaskSlot><Ico n="win" s={11} /></TaskSlot>
        <TaskSlot><Ico n="ring" s={11} /></TaskSlot>
        <TaskSlot><Ico n="tv" s={11} /></TaskSlot>
        <TaskSlot $run><Ico n="folder" s={13} /></TaskSlot>
        <TaskSlot $run><Ico n="edge" s={13} /></TaskSlot>
        <TaskSlot $on $run><RevitTile>R</RevitTile></TaskSlot>
        <TaskSlot><Ico n="spot" s={13} /></TaskSlot>
        <TaskSlot $run><Ico n="chrome" s={13} /></TaskSlot>
        <TaskSlot $run><Ico n="zoomA" s={13} /></TaskSlot>
        <Tray><Ico n="net" s={9} /><Clock><span>10:39 AM</span><span>2/4/2021</span></Clock></Tray>
      </Taskbar>
    </Page>
  );
}
